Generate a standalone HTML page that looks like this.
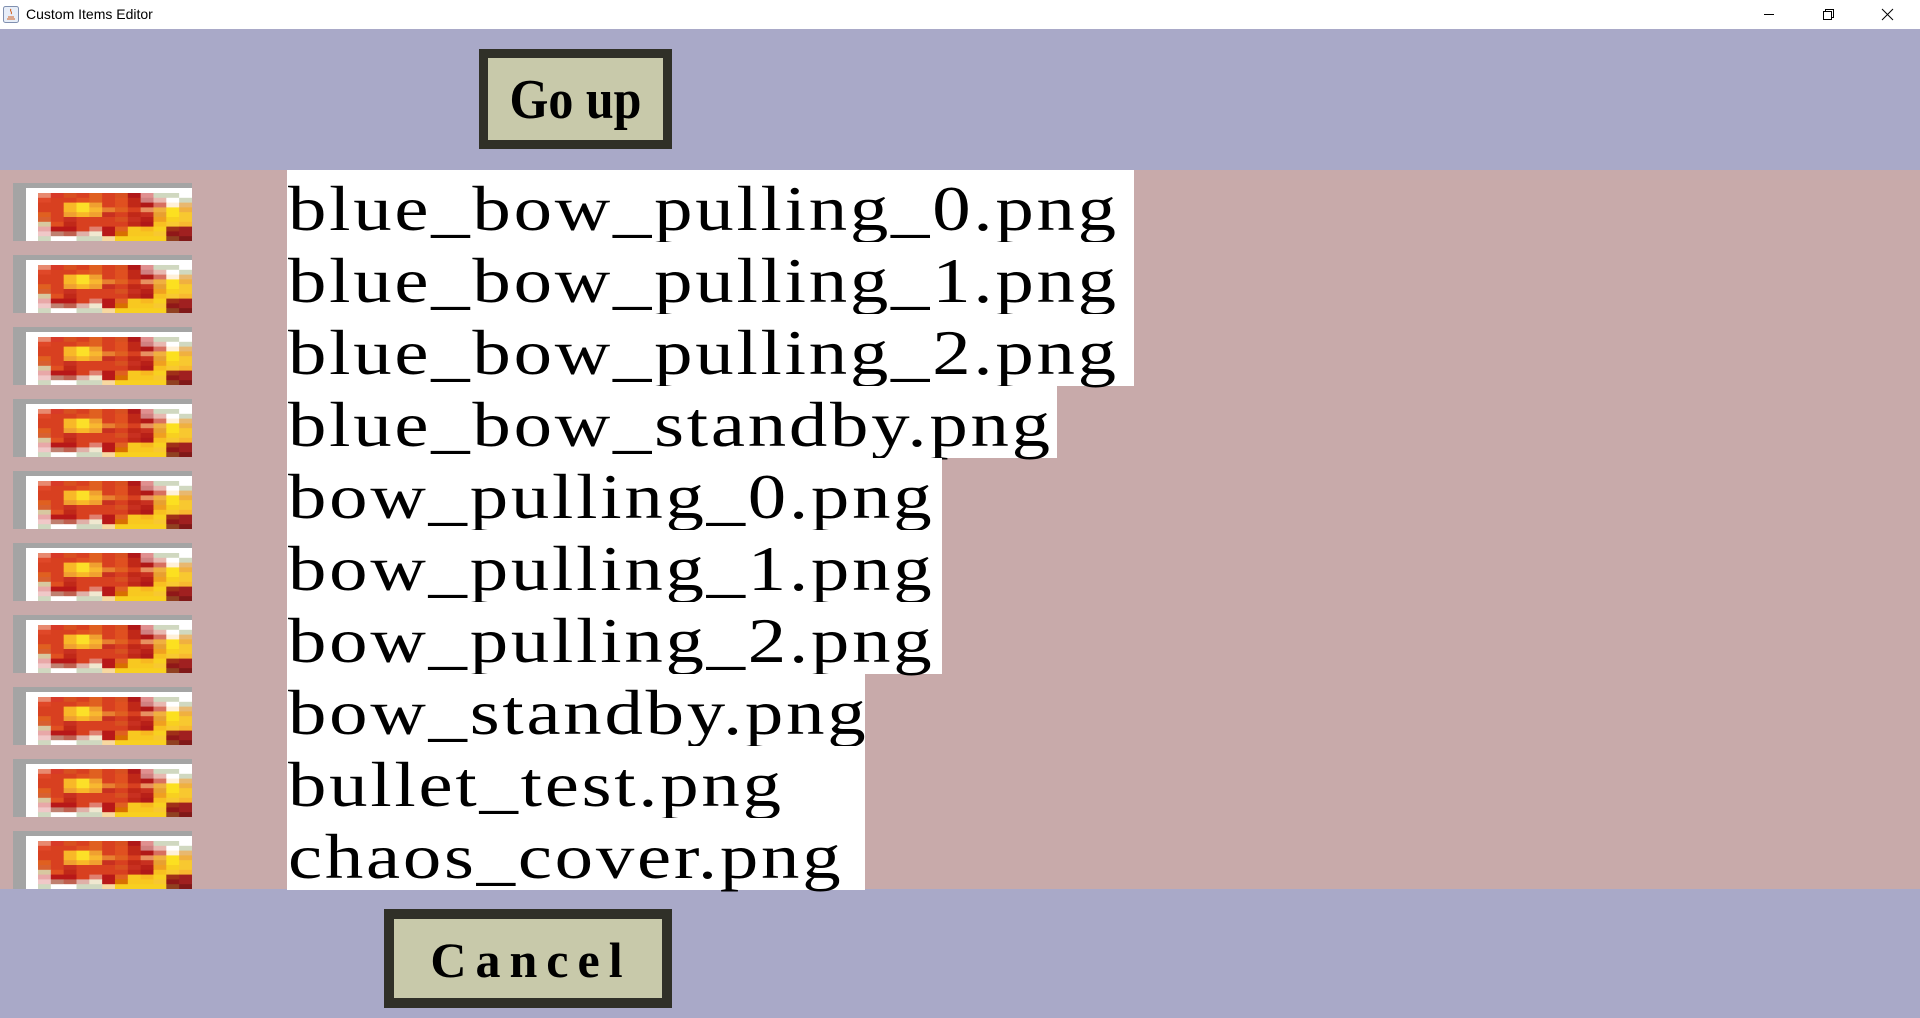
<!DOCTYPE html>
<html><head><meta charset="utf-8"><style>
body{margin:0;width:1920px;height:1018px;position:relative;overflow:hidden;background:#c8aaaa;font-family:"Liberation Serif",serif}
.tb{position:absolute;left:0;top:0;width:1920px;height:29px;background:#fff}
.tb span{position:absolute;left:26px;top:6px;font:14px "Liberation Sans",sans-serif;color:#000}
.top{position:absolute;left:0;top:29px;width:1920px;height:141px;background:#a9a9c8}
.bot{position:absolute;left:0;top:889px;width:1920px;height:129px;background:#a9a9c8}
.btn{position:absolute;background:#c8c9aa;border:solid #303028;box-sizing:border-box;font-weight:bold;color:#000;text-align:center}
.row{position:absolute;left:287px;height:72px;background:#fff;line-height:72px;white-space:nowrap;color:#000}
.row span{position:absolute;left:1px;top:3px;font-size:64px;letter-spacing:2.3px;transform:scaleX(1.2);transform-origin:0 0}
.ic{position:absolute;left:13px}
</style></head><body>
<div class="tb">
<svg style="position:absolute;left:3px;top:6px" width="16" height="17"><rect x="0.5" y="0.5" width="15" height="16" rx="2" fill="#e8eef8" stroke="#8090b0"/><path d="M8 3c-2 2 2 3 0 5M5 11h6M4 13h8" stroke="#d06020" fill="none"/></svg>
<span>Custom Items Editor</span>
<svg style="position:absolute;left:1764px;top:8px" width="140" height="14" fill="none" stroke="#000" stroke-width="1">
<path d="M0 6.5h10"/>
<rect x="59.5" y="3.5" width="8" height="8"/><path d="M61.5 3.5v-2h8v8h-2"/>
<path d="M118 1l11 11M129 1l-11 11"/></svg>
</div>
<div class="top"></div>
<div class="bot"></div>
<div class="btn" style="left:479px;top:49px;width:193px;height:100px;border-width:9px;font-size:50px;line-height:82px"><span style="display:inline-block;transform:scaleY(1.12)">Go up</span></div>
<div class="btn" style="left:384px;top:909px;width:288px;height:99px;border-width:10px;font-size:50px;line-height:82px;letter-spacing:9px;text-indent:6px">Cancel</div>

<div id="rows"></div>
<script>
var names=[["blue_bow_pulling_0.png",1134],["blue_bow_pulling_1.png",1134],["blue_bow_pulling_2.png",1134],["blue_bow_standby.png",1057],["bow_pulling_0.png",942],["bow_pulling_1.png",942],["bow_pulling_2.png",942],["bow_standby.png",865],["bullet_test.png",865],["chaos_cover.png",865]];
var g=[
"e88a70 d83a28 d85020 d84020 e06020 d84020 d85020 b01818 e09090 d0d8c0 d0d8c0 ffffff",
"e04828 d84020 d84020 e05020 e06020 d84020 e05020 c02818 d08080 e8b8b0 ffffff d0d8c0",
"d84020 d84020 f8b828 fce028 f0a030 d84020 e05020 c02818 b01818 d87060 fff0d8 e8b870",
"d84020 d84020 f8b828 fce028 f8b830 e88030 e06020 d84020 e89060 f0b040 fce020 f0b040",
"e06020 d84020 f0a030 f8b828 f0a030 c83020 d84020 c02818 c83020 e8a030 fce020 f8c830",
"d86030 d84020 c83020 d84020 d84020 d84020 d85020 c83020 b82018 f0a020 f8d020 f8c830",
"d8c8a0 e05020 c02818 d84020 d84020 d84020 d84020 c02818 b01818 f8c020 f8c830 f8b830",
"e8a8a8 b81818 b81818 d84020 e08070 b81818 e06020 f8c820 f8b820 f8d020 a03018 a02020",
"f0c8c8 c08070 c06050 e0b0a8 f0e8d0 b81818 d87000 f8c820 f8c820 f8c830 901818 a02020",
"d0d8c0 ffffff ffffff d0d8c0 d0d8c0 f8d8a0 f8d020 f8d020 f8d020 f8d020 904020 801818"];
var art='<rect x="0" y="0" width="179" height="58" fill="#a4a4a4"/><rect x="13" y="5" width="166" height="53" fill="#fff"/>';
for(var r=0;r<10;r++){var c=g[r].split(" ");for(var k=0;k<12;k++){art+='<rect x="'+(25+k*12.83).toFixed(2)+'" y="'+(10+r*4.8)+'" width="13.3" height="5.3" fill="#'+c[k]+'"/>';}}
var h="";
for(var i=0;i<10;i++){var y=170+i*72;
h+='<svg class="ic" style="top:'+(y+13)+'px" width="179" height="58">'+art+'</svg>';
h+='<div class="row" style="top:'+y+'px;width:'+(names[i][1]-287)+'px"><span>'+names[i][0]+'</span></div>';}
document.getElementById("rows").innerHTML=h;
</script>
</body></html>
